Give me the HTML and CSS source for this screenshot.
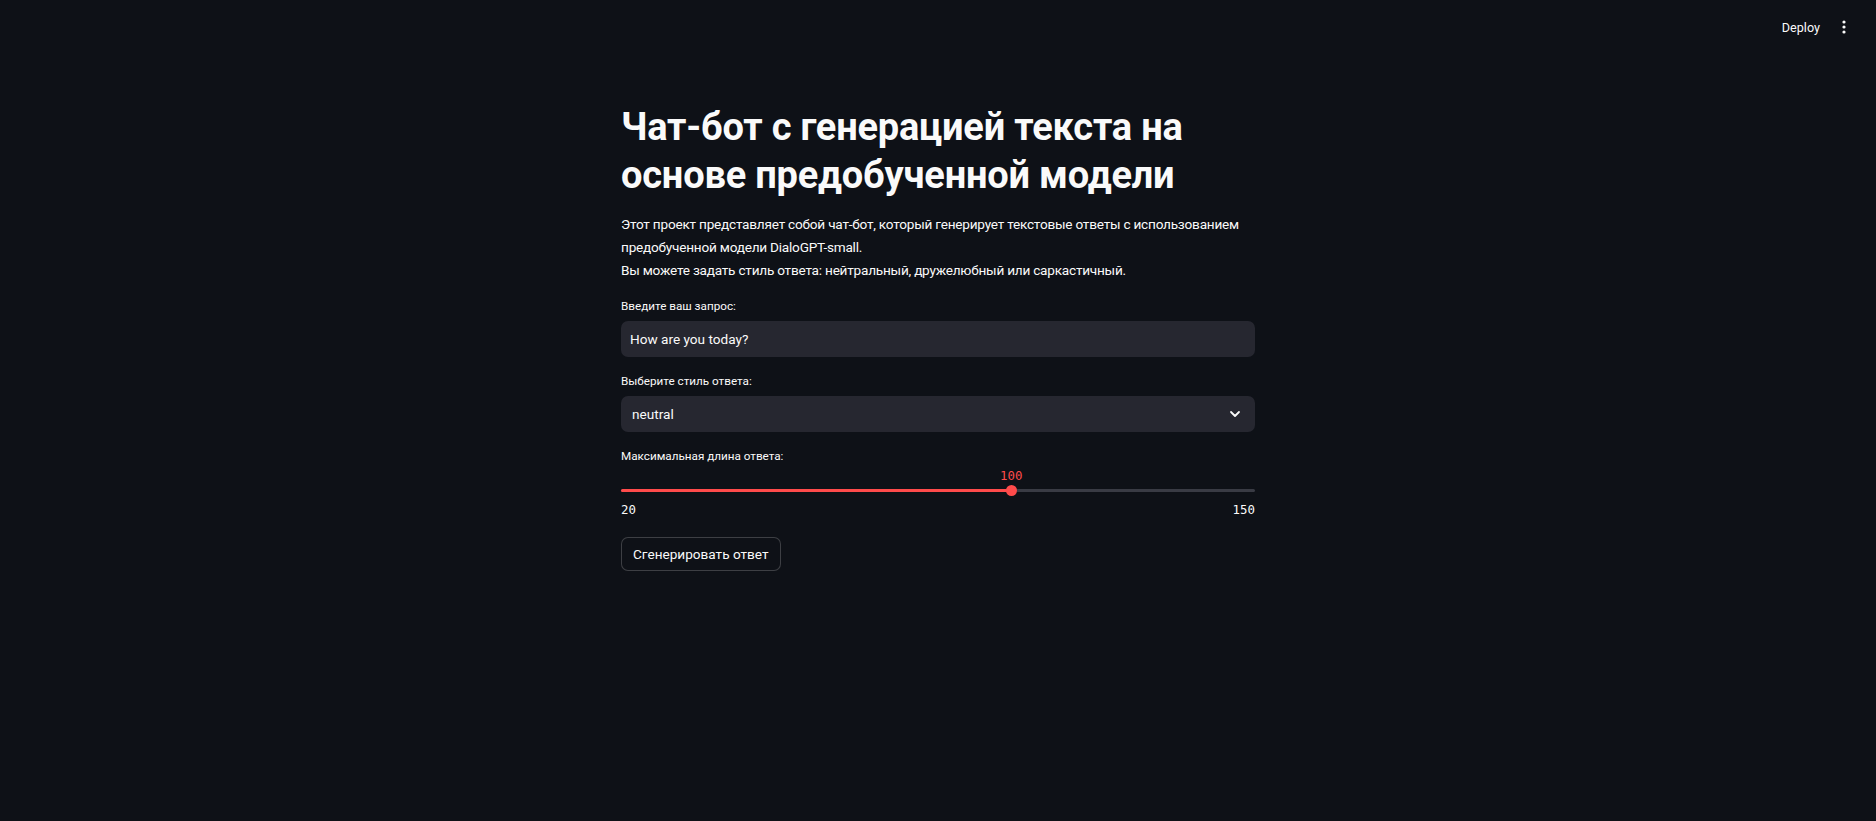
FILE: index.html
```html
<!DOCTYPE html>
<html lang="ru">
<head>
<meta charset="utf-8">
<title>Чат-бот</title>
<link rel="stylesheet" href="styles.css">
</head>
<body>
<header class="topbar">
  <span class="deploy">Deploy</span>
  <span class="menu">
    <svg width="4" height="14" viewBox="0 0 4 14"><circle cx="2" cy="2" r="1.6" fill="#fafafa"/><circle cx="2" cy="7" r="1.6" fill="#fafafa"/><circle cx="2" cy="12" r="1.6" fill="#fafafa"/></svg>
  </span>
</header>
<main class="main">
  <h1 class="title">Чат-бот с генерацией текста на основе предобученной модели</h1>
  <div class="intro">
    <p>Этот проект представляет собой чат-бот, который генерирует текстовые ответы с использованием предобученной модели DialoGPT-small.<br>Вы можете задать стиль ответа: нейтральный, дружелюбный или саркастичный.</p>
  </div>
  <div class="field">
    <label class="label">Введите ваш запрос:</label>
    <div class="input">How are you today?</div>
  </div>
  <div class="field">
    <label class="label">Выберите стиль ответа:</label>
    <div class="input select">
      <span>neutral</span>
      <svg class="chev" width="12" height="8" viewBox="0 0 12 8"><path d="M2 2l4 4 4-4" fill="none" stroke="#fafafa" stroke-width="1.8" stroke-linecap="round" stroke-linejoin="round"/></svg>
    </div>
  </div>
  <div class="field">
    <label class="label">Максимальная длина ответа:</label>
    <div class="slider">
      <div class="track">
        <div class="fill" style="width:61.54%"></div>
        <div class="thumb" style="left:61.54%"><span class="val">100</span></div>
      </div>
      <div class="ticks"><span>20</span><span>150</span></div>
    </div>
  </div>
  <div class="field">
    <button class="btn">Сгенерировать ответ</button>
  </div>
</main>
</body>
</html>
```
FILE: styles.css
```css
html, body {
  margin: 0;
  padding: 0;
  background: #0e1117;
  color: #fafafa;
  font-family: Roboto, "Noto Sans", sans-serif;
  height: 100%;
}
.topbar {
  height: 54px;
  display: flex;
  align-items: center;
  justify-content: flex-end;
  padding-right: 30px;
}
.deploy {
  font-size: 12.6px;
  margin-right: 22px;
}
.menu {
  display: flex;
  align-items: center;
}
.main {
  width: 634px;
  margin: 0 auto;
  padding-top: 32px;
  display: flex;
  flex-direction: column;
  gap: 14px;
}
.title {
  margin: 0;
  padding: 18px 0 0;
  font-size: 38px;
  font-weight: 700;
  line-height: 47.5px;
  letter-spacing: -0.2px;
}
.intro p {
  margin: 0;
  font-size: 13.6px;
  line-height: 23px;
  letter-spacing: -0.22px;
}
.field {
  display: flex;
  flex-direction: column;
}
.label {
  font-size: 11.7px;
  line-height: 21.6px;
  margin-bottom: 3.6px;
}
.input {
  height: 36px;
  background: #262730;
  border-radius: 7px;
  box-sizing: border-box;
  padding: 0 9px;
  display: flex;
  align-items: center;
  font-size: 13.6px;
}
.select {
  justify-content: space-between;
  padding: 0 14px 0 11px;
}
.slider {
  height: 51px;
  position: relative;
}
.track {
  position: relative;
  margin-top: 17px;
  height: 3.6px;
  border-radius: 2px;
  background: #393b44;
}
.fill {
  height: 100%;
  background: #ff4b4b;
  border-radius: 2px;
}
.thumb {
  position: absolute;
  top: 50%;
  width: 11px;
  height: 11px;
  margin: -5.5px 0 0 -5.5px;
  border-radius: 50%;
  background: #ff4b4b;
}
.val {
  position: absolute;
  bottom: 13px;
  left: 50%;
  transform: translateX(-50%);
  font-family: "DejaVu Sans Mono", monospace;
  font-size: 12.4px;
  color: #ff4b4b;
}
.ticks {
  display: flex;
  justify-content: space-between;
  margin-top: 10px;
  font-family: "DejaVu Sans Mono", monospace;
  font-size: 12.4px;
}
.btn {
  align-self: flex-start;
  height: 34px;
  padding: 0 11px;
  background: #0e1117;
  color: #fafafa;
  border: 1px solid rgba(250,250,250,0.2);
  border-radius: 7px;
  font-family: Roboto, "Noto Sans", sans-serif;
  font-size: 13.6px;
}
```
